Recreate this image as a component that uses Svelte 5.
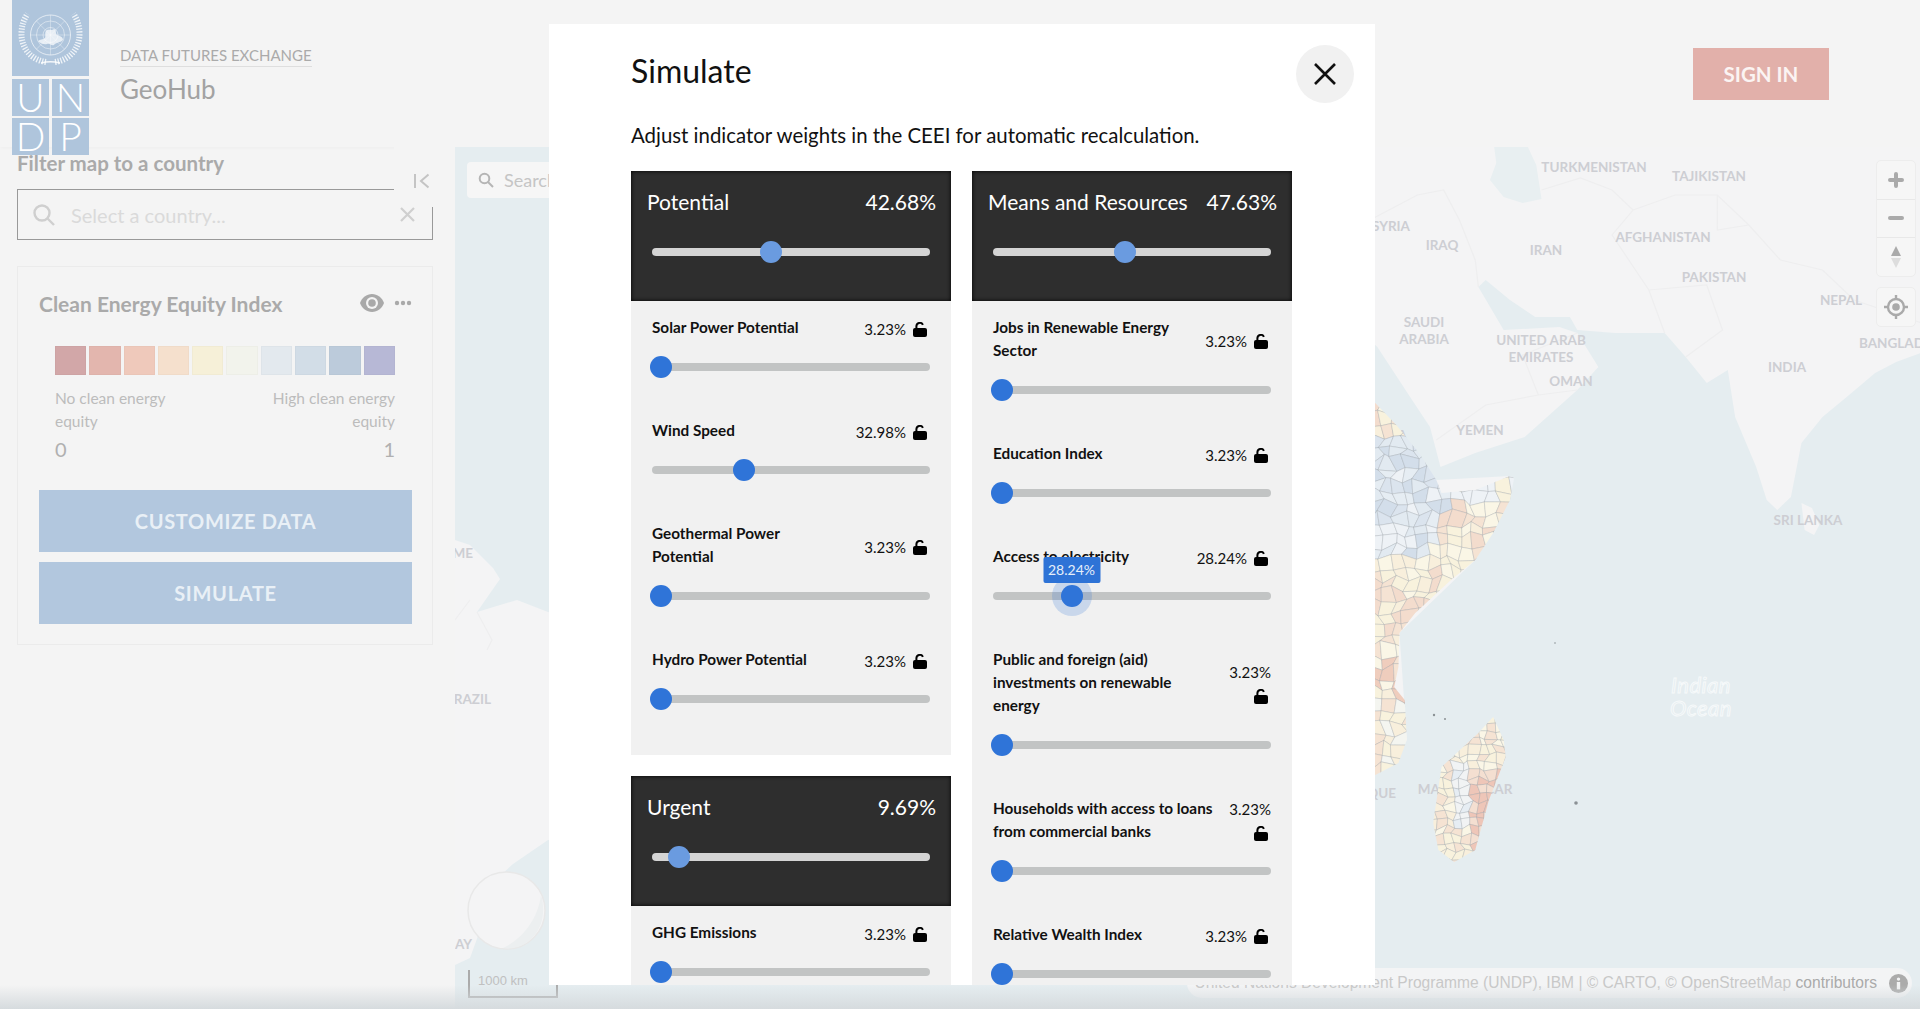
<script lang="ts">
	const legend = ['#d2a7a8', '#e3b6ae', '#efc9bb', '#f5e0cd', '#f6f0d8', '#f2f3ec', '#e3e9ee', '#d2dde7', '#bccbdb', '#b7b8d6'];

	const leftGroups = [
		{
			name: 'Potential',
			pct: 42.68,
			items: [
				{ lines: ['Solar Power Potential'], pct: 3.23 },
				{ lines: ['Wind Speed'], pct: 32.98 },
				{ lines: ['Geothermal Power', 'Potential'], pct: 3.23 },
				{ lines: ['Hydro Power Potential'], pct: 3.23 }
			]
		},
		{
			name: 'Urgent',
			pct: 9.69,
			items: [{ lines: ['GHG Emissions'], pct: 3.23 }]
		}
	];

	const rightGroups = [
		{
			name: 'Means and Resources',
			pct: 47.63,
			items: [
				{ lines: ['Jobs in Renewable Energy', 'Sector'], pct: 3.23 },
				{ lines: ['Education Index'], pct: 3.23 },
				{ lines: ['Access to electricity'], pct: 28.24, active: true },
				{ lines: ['Public and foreign (aid)', 'investments on renewable', 'energy'], pct: 3.23, stack: true },
				{ lines: ['Households with access to loans', 'from commercial banks'], pct: 3.23, stack: true },
				{ lines: ['Relative Wealth Index'], pct: 3.23 }
			]
		}
	];

	const columns = [leftGroups, rightGroups];

	const mapLabels = [
		['TURKMENISTAN', 1594, 172, 'middle'],
		['TAJIKISTAN', 1709, 181, 'middle'],
		['SYRIA', 1410, 231, 'end'],
		['IRAQ', 1442, 250, 'middle'],
		['IRAN', 1546, 255, 'middle'],
		['AFGHANISTAN', 1663, 242, 'middle'],
		['PAKISTAN', 1714, 282, 'middle'],
		['NEPAL', 1841, 305, 'middle'],
		['SAUDI', 1424, 327, 'middle'],
		['ARABIA', 1424, 344, 'middle'],
		['UNITED ARAB', 1541, 345, 'middle'],
		['EMIRATES', 1541, 362, 'middle'],
		['OMAN', 1571, 386, 'middle'],
		['INDIA', 1787, 372, 'middle'],
		['BANGLADESH', 1859, 348, 'start'],
		['YEMEN', 1480, 435, 'middle'],
		['SRI LANKA', 1808, 525, 'middle'],
		['ERITREA', 1407, 440, 'end'],
		['MOZAMBIQUE', 1396, 798, 'end'],
		['MADAGASCAR', 1465, 794, 'middle'],
		['SURINAME', 473, 558, 'end'],
		['BRAZIL', 491, 704, 'end'],
		['URUGUAY', 472, 949, 'end']
	];

	// fake admin units for the choropleth, seeded so every run draws the same map
	const hash = (a: number, b: number) => {
		const s = Math.sin(a * 12.9898 + b * 78.233) * 43758.5453;
		return s - Math.floor(s);
	};

	function cells(x0: number, y0: number, cols: number, rows: number, size: number, colour: (x: number, y: number, r: number) => string) {
		const vertex = (i: number, j: number) => [
			x0 + i * size + (hash(i, j) - 0.5) * size * 0.8,
			y0 + j * size + (hash(j + 3, i + 7) - 0.5) * size * 0.8
		];
		const out = [];
		for (let i = 0; i < cols; i++) {
			for (let j = 0; j < rows; j++) {
				const pts = [vertex(i, j), vertex(i + 1, j), vertex(i + 1, j + 1), vertex(i, j + 1)];
				const cx = x0 + (i + 0.5) * size;
				const cy = y0 + (j + 0.5) * size;
				out.push({ points: pts.map((p) => p.join(',')).join(' '), fill: colour(cx, cy, hash(i + 11, j + 5)) });
			}
		}
		return out;
	}

	const warm = ['#f8f2dd', '#f8efdc', '#f5e3d3', '#faf6e6', '#f3dccd'];
	const cool = ['#e6edf3', '#dbe4ee', '#eef2f6', '#d3deea', '#e2eaf1'];

	const africa = cells(1370, 392, 13, 36, 11, (x, y, r) => {
		if (y < 440) return warm[Math.floor(r * 5)];
		if (y < 560 && x < 1445 - (y - 500) * 0.3) return cool[Math.floor(r * 5)];
		if (y < 500) return r > 0.7 ? '#f8f2dd' : '#eef2f6';
		if (y > 640 && y < 700 && r > 0.75) return '#efcdbd';
		if (y > 700 && r > 0.6) return '#f4f5f0';
		return warm[Math.floor(r * 5)];
	});

	const madagascar = cells(1425, 715, 10, 19, 8, (x, y, r) => {
		if (x > 1468 && y > 770) return r > 0.4 ? '#eec6b8' : '#f4dfd1';
		if (x > 1445 && x < 1468 && y > 760 && y < 830) return r > 0.5 ? '#f1f3f4' : '#e6edf3';
		return warm[Math.floor(r * 4)];
	});
</script>

<div class="page">
	<header class="header">
		<div class="logo">
			<div class="logo-emblem">
				<svg width="77" height="76" viewBox="0 0 77 76" fill="none" stroke="#fff">
					<circle cx="38.5" cy="35" r="20" stroke-width="0.8" opacity="0.8" />
					<circle cx="38.5" cy="35" r="14" stroke-width="0.7" opacity="0.65" />
					<circle cx="38.5" cy="35" r="7.5" stroke-width="0.7" opacity="0.65" />
					<path d="M38.5 15v40M18.5 35h40M24.4 21l28.2 28.2M52.6 21L24.4 49.200" stroke-width="0.6" opacity="0.55" />
					<path d="M26 41c2-2 5-1 7-3 1-3-1-6 2-8 3-1 4 1 7-1 3 1 1 4 3 6 3 1 6 2 6 5-3 3-7 2-9 5-3 1-4-2-7-1-3 1-7-1-9-3z" fill="#fff" stroke="none" opacity="0.7" />
					<path d="M34 62C19 60 9.500 48 9.500 34c0-8 2-14 6-20M43 62c15-2 24.500-14 24.500-28 0-8-2-14-6-20" stroke-width="6" stroke-dasharray="1.3 1.500" opacity="0.8" />
					<path d="M29 63c6-1.500 13-1.500 19 0" stroke-width="1.400" opacity="0.85" />
				</svg>
			</div>
			<div class="logo-letter">U</div>
			<div class="logo-letter">N</div>
			<div class="logo-letter">D</div>
			<div class="logo-letter">P</div>
		</div>
		<div class="brand">
			<span class="brand-top">DATA FUTURES EXCHANGE</span>
			<span class="brand-name">GeoHub</span>
		</div>
		<button class="sign-in">SIGN IN</button>
	</header>

	<main class="main">
		<aside class="sidebar">
			<div class="filter-label">Filter map to a country</div>
			<div class="filter-input">
				<svg width="24" height="24" viewBox="0 0 24 24" fill="none" stroke="#cfcfcf" stroke-width="2.4">
					<circle cx="10" cy="10" r="7.5" />
					<path d="M15.500 15.500l6.500 6.500" />
				</svg>
				<span class="placeholder">Select a country...</span>
				<svg class="clear" width="15" height="15" viewBox="0 0 15 15" stroke="#cfcfcf" stroke-width="2.2">
					<path d="M1 1l13 13M14 1L1 14" />
				</svg>
			</div>

			<div class="collapse">
				<svg width="18" height="18" viewBox="0 0 18 18" fill="none" stroke="#c4c4c4" stroke-width="2">
					<path d="M2 2v14M15.500 2.500L8 9l7.500 6.500" />
				</svg>
			</div>

			<section class="card">
				<div class="card-head">
					<h2>Clean Energy Equity Index</h2>
					<svg width="24" height="18" viewBox="0 0 24 18">
						<path fill="#a9a9a9" d="M12 0C6.500 0 2 3.600 0 9c2 5.400 6.500 9 12 9s10-3.600 12-9c-2-5.400-6.500-9-12-9z" />
						<circle cx="12" cy="9" r="6" fill="#f4f4f4" />
						<circle cx="12" cy="9" r="3.800" fill="#a9a9a9" />
					</svg>
					<svg class="dots" width="18" height="6" viewBox="0 0 18 6" fill="#a9a9a9">
						<circle cx="3" cy="3" r="2.200" />
						<circle cx="9" cy="3" r="2.200" />
						<circle cx="15" cy="3" r="2.200" />
					</svg>
				</div>
				<div class="legend">
					{#each legend as colour}
						<div class="swatch" style:background={colour}></div>
					{/each}
				</div>
				<div class="legend-text">
					<span>No clean energy<br />equity</span>
					<span class="end">High clean energy<br />equity</span>
				</div>
				<div class="legend-nums">
					<span>0</span>
					<span>1</span>
				</div>
				<button class="action first">CUSTOMIZE DATA</button>
				<button class="action">SIMULATE</button>
			</section>
		</aside>

		<div class="map">
			<svg class="map-svg" viewBox="455 147 1465 862">
				<defs>
					<clipPath id="africa-clip">
						<path d="M1360 395L1375 403 1395 425 1418 455 1433 480 1438 493 1470 490 1503 476 1507 478 1503 500 1487 533 1470 560 1447 580 1413 613 1398 633 1397 667 1393 687 1403 700 1405 740 1397 763 1375 775 1360 780z" />
					</clipPath>
					<clipPath id="mada-clip">
						<path d="M1487 717L1497 740 1499 757 1483 800 1470 850 1450 862 1435 850 1430 823 1438 767 1473 733z" />
					</clipPath>
				</defs>

				<!-- land, south america -->
				<path class="land" d="M455 540L470 545 493 568 500 579 477 612 517 600 548 612 600 620V835L548 840 513 864 490 885 482 925 470 958 455 965z" />
				<path class="border" d="M477 612L492 640 487 650M455 620L470 600" />
				<ellipse cx="506.500" cy="910.500" rx="38.500" ry="38.500" fill="#f4f4f5" stroke="#e8e8e8" stroke-width="1.500" />
				<path d="M541 895C538 918 524 938 503 948 530 952 550 925 541 895z" fill="#eceff0" />

				<!-- land, asia and arabia; coordinates read off a crop, so stretched to fit -->
				<g transform="translate(1370 0) scale(1.0523 1) translate(-1370 0)">
					<path class="land" d="M1370 147H1920V340L1893 353 1870 362 1850 373 1823 397 1800 417 1780 443 1770 497 1757 510 1747 500 1737 467 1717 417 1710 370 1690 383 1670 357 1650 333 1603 333 1567 330 1560 317 1527 317 1503 300 1480 280 1473 287 1497 330 1550 327 1567 333 1587 367 1567 390 1517 437 1470 453 1437 467 1427 427 1410 400 1377 347 1370 340z" />
					<path class="land" d="M1780 503L1790 508 1797 525 1792 535 1783 530z" />
					<path class="land" d="M1370 403L1375 403 1433 480 1503 476 1507 478 1470 560 1398 633 1405 740 1375 775 1370 775z" />

					<!-- inland seas -->
					<path class="water" d="M1488 147H1520L1528 165 1533 199 1515 203 1497 197 1484 180 1490 163z" />

					<!-- borders -->
					<path class="border" d="M1370 220L1415 195 1440 190 1455 220 1470 260 1473 287M1533 190L1570 178 1600 190 1620 210 1600 235 1635 290 1650 333M1620 210L1660 195 1700 195 1730 225 1760 260 1800 270 1830 300 1900 325M1700 195L1700 230 1730 225M1635 290L1690 285 1705 330 1670 357M1433 440L1480 405 1530 395 1567 390M1530 395L1515 355 1567 333" />
				</g>

				{#each mapLabels as [label, x, y, anchor]}
					<text class="map-label" {x} {y} text-anchor={anchor}>{label}</text>
				{/each}

				<g transform="translate(1370 0) scale(1.0523 1) translate(-1370 0)">
					{#each africa as cell}
						<polygon class="cell" clip-path="url(#africa-clip)" points={cell.points} fill={cell.fill} />
					{/each}
					{#each madagascar as cell}
						<polygon class="cell" clip-path="url(#mada-clip)" points={cell.points} fill={cell.fill} />
					{/each}
				</g>

				<text class="ocean" x="1701" y="693">Indian</text>
				<text class="ocean" x="1701" y="716">Ocean</text>

				<circle cx="1576" cy="803" r="1.800" fill="#8b9195" />
				<circle cx="1434" cy="715" r="1.200" fill="#8b9195" />
				<circle cx="1445" cy="719" r="1" fill="#8b9195" />
				<circle cx="1555" cy="643" r="0.800" fill="#8b9195" />
			</svg>

			<div class="search-box">
				<svg width="16" height="16" viewBox="0 0 16 16" fill="none" stroke="#b5b5b5" stroke-width="2">
					<circle cx="6.500" cy="6.500" r="4.800" />
					<path d="M10 10l5 5" />
				</svg>
				<span>Search...</span>
			</div>

			<div class="scale">1000 km</div>

			<div class="controls">
				<div class="nav">
					<div class="nav-btn">
						<svg width="16" height="16" viewBox="0 0 16 16" stroke="#aaa" stroke-width="4" stroke-linecap="round"><path d="M8 2v12M2 8h12" /></svg>
					</div>
					<div class="nav-btn">
						<svg width="16" height="16" viewBox="0 0 16 16" stroke="#aaa" stroke-width="4" stroke-linecap="round"><path d="M2 8h12" /></svg>
					</div>
					<div class="nav-btn">
						<svg width="12" height="24" viewBox="0 0 12 24"><path d="M6 1l5 10H1z" fill="#aaa" /><path d="M6 23L1 13h10z" fill="#ddd" /></svg>
					</div>
				</div>
				<div class="nav geo">
					<svg width="24" height="24" viewBox="0 0 24 24" fill="none">
						<circle cx="12" cy="12" r="8" stroke="#aaa" stroke-width="2.400" />
						<circle cx="12" cy="12" r="3.800" fill="#aaa" />
						<path d="M12 0v4M12 20v4M0 12h4M20 12h4" stroke="#aaa" stroke-width="2.400" />
					</svg>
				</div>
			</div>

			<div class="attribution">
				<span>United Nations Development Programme (UNDP), IBM | © CARTO, © OpenStreetMap <b>contributors</b></span>
				<svg class="info" width="19" height="19" viewBox="0 0 18 18">
					<circle cx="9" cy="9" r="9" fill="#ababab" />
					<circle cx="9" cy="4.800" r="1.600" fill="#f3f4f5" />
					<path d="M7.400 7.600h3.200v7H7.400z" fill="#f3f4f5" />
				</svg>
			</div>
		</div>
	</main>

	<div class="modal">
		<h1>Simulate</h1>
		<button class="close" aria-label="Close">
			<svg width="24" height="24" viewBox="0 0 24 24" stroke="#111" stroke-width="2.600"><path d="M2 2l20 20M22 2L2 22" /></svg>
		</button>
		<p class="intro">Adjust indicator weights in the CEEI for automatic recalculation.</p>

		<div class="columns">
			{#each columns as groups}
				<div class="column">
					{#each groups as group}
						<section class="group">
							<div class="group-head">
								<div class="group-title">
									<span>{group.name}</span>
									<span>{group.pct}%</span>
								</div>
								<div class="slider light">
									<div class="thumb" style:left="{group.pct}%"></div>
								</div>
							</div>
							<div class="group-body">
								{#each group.items as item}
									<div class="item">
										<div class="item-head">
											<div class="item-label">
												{#each item.lines as line}
													<div>{line}</div>
												{/each}
											</div>
											<div class="item-value" class:stack={item.stack}>
												<span>{item.pct}%</span>
												<svg width="14" height="15" viewBox="0 0 14 15">
													<rect y="6" width="14" height="9" rx="2" fill="#000" />
													<path d="M3.400 7V4.400a3.400 3.400 0 0 1 6.500-1.500" fill="none" stroke="#000" stroke-width="2" />
												</svg>
											</div>
										</div>
										<div class="slider">
											<div class="thumb" class:active={item.active} style:left="{item.pct}%">
												{#if item.active}
													<div class="tip">{item.pct}%</div>
												{/if}
											</div>
										</div>
									</div>
								{/each}
							</div>
						</section>
					{/each}
				</div>
			{/each}
		</div>
	</div>

	<div class="bottom-fade"></div>
</div>

<style>
	:global(body) {
		margin: 0;
		font-family: Lato, 'Open Sans', sans-serif;
	}
	h1,
	h2,
	p {
		margin: 0;
		font-weight: inherit;
	}
	button {
		border: 0;
		font-family: inherit;
		cursor: pointer;
	}

	.page {
		position: relative;
		width: 1920px;
		height: 1009px;
		overflow: hidden;
		background: #f4f4f4;
	}

	.header {
		display: flex;
		align-items: center;
		height: 147px;
		box-shadow: 0 1px 4px rgba(0, 0, 0, 0.03);
	}
	.logo {
		position: relative;
		z-index: 2;
		align-self: flex-start;
		display: grid;
		grid-template-columns: 37px 37px;
		grid-template-rows: 76px 37px 37px;
		gap: 2.5px 3px;
		flex: none;
		width: 77px;
		height: 155px;
		margin-left: 12px;
	}
	.logo-emblem {
		grid-column: span 2;
		background: #afc5dc;
	}
	.logo-letter {
		display: flex;
		align-items: center;
		justify-content: center;
		background: #afc5dc;
		color: #fff;
		font-size: 39px;
		font-weight: 300;
		line-height: 1;
	}
	.brand {
		display: flex;
		flex-direction: column;
		align-items: flex-start;
		margin-left: 31px;
		margin-top: 1px;
	}
	.brand-top {
		padding-bottom: 1px;
		border-bottom: 1px solid #dedede;
		color: #aaa;
		font-size: 15px;
		line-height: 20px;
	}
	.brand-name {
		margin-top: 7px;
		color: #a2a2a2;
		font-size: 26px;
		line-height: 30px;
	}
	.sign-in {
		width: 136px;
		height: 52px;
		margin-left: auto;
		margin-right: 91px;
		background: #e2b0aa;
		color: #fbf4f3;
		font-size: 20.5px;
		font-weight: 700;
	}

	.main {
		display: flex;
		height: 862px;
	}

	.sidebar {
		position: relative;
		flex: none;
		box-sizing: border-box;
		width: 455px;
		padding: 4px 22px 0 17px;
	}
	.filter-label {
		color: #aaa;
		font-size: 20.5px;
		font-weight: 700;
		line-height: 24px;
	}
	.filter-input {
		display: flex;
		align-items: center;
		box-sizing: border-box;
		height: 51px;
		margin-top: 14px;
		padding: 0 17px 0 14px;
		border: 1.5px solid #999;
	}
	.placeholder {
		margin-left: 15px;
		color: #dadada;
		font-size: 20px;
	}
	.clear {
		margin-left: auto;
	}
	.collapse {
		position: absolute;
		top: 0;
		right: 0;
		display: flex;
		align-items: flex-start;
		justify-content: center;
		box-sizing: border-box;
		width: 61px;
		height: 60px;
		padding: 25px 6px 0 0;
		background: #f4f4f4;
	}
	.card {
		box-sizing: border-box;
		height: 379px;
		margin-top: 26px;
		padding: 22px 20px 0 21px;
		border: 1px solid #ebebeb;
	}
	.card-head {
		display: flex;
		align-items: center;
		height: 28px;
		color: #aaa;
	}
	.card-head h2 {
		flex: 1;
		font-size: 21px;
		font-weight: 700;
	}
	.dots {
		margin-left: 10px;
	}
	.legend {
		display: grid;
		grid-template-columns: repeat(10, 1fr);
		gap: 3px;
		height: 29px;
		margin: 29px 17px 0 16px;
	}
	.swatch {
		border: 1px solid rgba(0, 0, 0, 0.02);
	}
	.legend-text,
	.legend-nums {
		display: flex;
		justify-content: space-between;
		margin: 0 17px 0 16px;
	}
	.legend-text {
		margin-top: 12px;
		color: #bcbcbc;
		font-size: 15.5px;
		line-height: 23px;
	}
	.end {
		text-align: right;
	}
	.legend-nums {
		margin-top: 3px;
		color: #b0b0b0;
		font-size: 20px;
		line-height: 26px;
	}
	.action {
		display: block;
		width: 373px;
		height: 62px;
		margin-top: 10px;
		background: #b2c7de;
		color: #e9f0f6;
		font-size: 20px;
		font-weight: 700;
		letter-spacing: 0.7px;
	}
	.action.first {
		margin-top: 28px;
	}

	.map {
		position: relative;
		flex: 1;
		background: #e5edf0;
	}
	.map-svg {
		position: absolute;
		inset: 0;
		width: 100%;
		height: 100%;
	}
	.land {
		fill: #f4f4f5;
	}
	.water {
		fill: #e8eff1;
	}
	.border {
		fill: none;
		stroke: #eeeeef;
		stroke-width: 1.2;
	}
	.cell {
		stroke: #8f969c;
		stroke-width: 0.4;
		stroke-opacity: 0.65;
	}
	.map-label {
		fill: #cdced3;
		font-size: 13.5px;
		font-weight: 700;
	}
	.ocean {
		fill: none;
		stroke: #f6f9fa;
		stroke-width: 1;
		font-size: 22px;
		font-style: italic;
		letter-spacing: 0.5px;
		text-anchor: middle;
	}
	.search-box {
		position: absolute;
		top: 15px;
		left: 12px;
		display: flex;
		align-items: center;
		gap: 10px;
		width: 200px;
		height: 36px;
		padding-left: 11px;
		border-radius: 4px;
		background: #f6f6f6;
		color: #c5c5c5;
		font-size: 18px;
	}
	.scale {
		position: absolute;
		top: 823px;
		left: 13px;
		box-sizing: border-box;
		width: 90px;
		height: 28px;
		padding-left: 8px;
		border: 2px solid #ababab;
		border-top: 0;
		color: #c0c0c0;
		font-family: 'Liberation Sans', sans-serif;
		font-size: 13px;
		line-height: 22px;
	}
	.controls {
		position: absolute;
		top: 13px;
		right: 4px;
		display: flex;
		flex-direction: column;
		gap: 10px;
	}
	.nav {
		box-sizing: border-box;
		width: 40px;
		border: 1px solid #ededed;
		border-radius: 5px;
		background: #f6f6f6;
	}
	.nav-btn {
		display: flex;
		align-items: center;
		justify-content: center;
		height: 37.5px;
	}
	.nav-btn + .nav-btn {
		border-top: 1px solid #e8e8e8;
	}
	.geo {
		display: flex;
		align-items: center;
		justify-content: center;
		height: 40px;
	}
	.attribution {
		position: absolute;
		right: 8px;
		bottom: 11px;
		display: flex;
		align-items: center;
		justify-content: flex-end;
		gap: 12px;
		box-sizing: border-box;
		width: 725px;
		height: 30px;
		padding-right: 4px;
		border-radius: 15px;
		background: #f3f4f5;
		color: #c8c8c8;
		font-family: 'Liberation Sans', sans-serif;
		font-size: 15.6px;
		white-space: nowrap;
	}
	.attribution b {
		color: #a9a9a9;
		font-weight: 400;
	}
	.info {
		flex: none;
	}

	.modal {
		position: absolute;
		top: 24px;
		left: 549px;
		z-index: 3;
		box-sizing: border-box;
		width: 826px;
		height: 961px;
		padding: 24px 83px 0 82px;
		overflow: hidden;
		background: #fff;
		color: #111;
	}
	.modal h1 {
		font-size: 32px;
		line-height: 46px;
	}
	.close {
		position: absolute;
		top: 21px;
		right: 21px;
		display: flex;
		align-items: center;
		justify-content: center;
		width: 58px;
		height: 58px;
		padding: 0;
		border-radius: 50%;
		background: #f1f1f1;
	}
	.intro {
		margin-top: 26px;
		font-size: 20.4px;
		line-height: 30px;
	}
	.columns {
		display: grid;
		grid-template-columns: 320px 320px;
		gap: 21px;
		margin-top: 21px;
	}
	.column {
		display: flex;
		flex-direction: column;
		gap: 21px;
	}

	.group-head {
		display: flex;
		flex-direction: column;
		box-sizing: border-box;
		height: 130px;
		padding: 17px 21px 0;
		background: #2e2e2e;
		box-shadow: inset 0 0 4px #000;
		color: #fff;
	}
	.group-title {
		display: flex;
		justify-content: space-between;
		margin: 0 -6px 25px -5px;
		font-size: 21px;
		line-height: 28px;
	}
	.group-body {
		padding: 15px 21px 4px;
		background: #f1f1f1;
	}
	.item {
		display: flex;
		flex-direction: column;
		padding-bottom: 41.5px;
	}
	.item-head {
		display: flex;
		align-items: center;
		justify-content: space-between;
		margin-bottom: 16.5px;
	}
	.item-label {
		font-size: 15.3px;
		font-weight: 700;
		line-height: 23px;
	}
	.item-value {
		display: flex;
		align-items: center;
		flex: none;
		gap: 7px;
		padding: 4px 3px 0 0;
		font-size: 15px;
		line-height: 17px;
	}
	.item-value.stack {
		flex-direction: column;
		align-items: flex-end;
		gap: 8px;
		padding: 2px 0 0;
	}
	.item-value.stack svg {
		margin-right: 3px;
	}

	.slider {
		position: relative;
		flex: none;
		height: 8px;
		margin: 7px 0;
		border-radius: 4px;
		background: #c2c4c4;
	}
	.slider.light {
		background: #d4d4d4;
	}
	.thumb {
		position: absolute;
		top: 50%;
		width: 22px;
		height: 22px;
		border-radius: 50%;
		background: #2f74d8;
		transform: translate(-50%, -50%);
	}
	.light .thumb {
		background: #6a9be0;
	}
	.thumb.active {
		box-shadow: 0 0 0 9px rgba(47, 116, 216, 0.2);
	}
	.tip {
		position: absolute;
		bottom: 24px;
		left: 50%;
		width: 57px;
		padding: 3px 0;
		border-radius: 2px;
		background: #2e73d6;
		color: #e6effa;
		font-size: 14px;
		line-height: 20px;
		text-align: center;
		transform: translateX(-50%);
	}

	.bottom-fade {
		position: absolute;
		left: 0;
		right: 0;
		bottom: 0;
		z-index: 4;
		height: 24px;
		background: linear-gradient(rgba(214, 219, 222, 0), #d6dbde);
		pointer-events: none;
	}
</style>
